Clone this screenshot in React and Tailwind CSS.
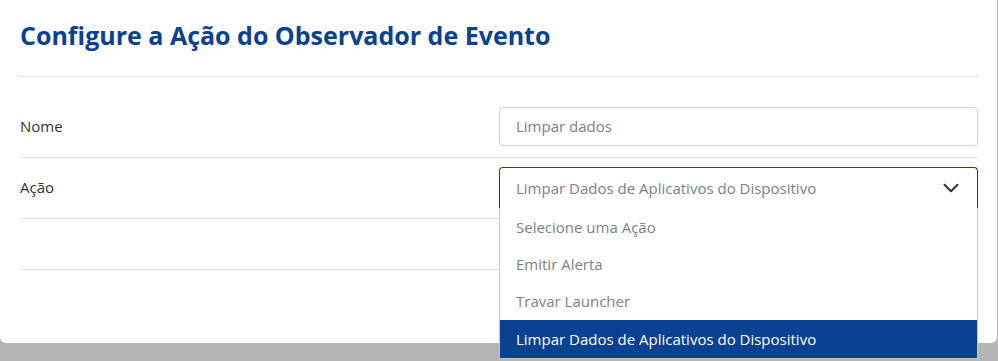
import { ChevronDown } from "lucide-react";

const OPTIONS = [
  "Selecione uma Ação",
  "Emitir Alerta",
  "Travar Launcher",
  "Limpar Dados de Aplicativos do Dispositivo",
];

export default function App() {
  const selected = OPTIONS[3];

  return (
    <div className="h-[361px] w-[998px] overflow-hidden bg-[#b5b5b5] font-['Open_Sans',sans-serif]">
      <div className="h-[343px] w-[997px] rounded-b-md bg-white">
        <div className="px-5">
          <h2 className="flex h-[76px] items-center pb-1 text-[25px] font-bold text-[#0b4191]">
            Configure a Ação do Observador de Evento
          </h2>
          <div className="w-[958px] border-t border-[#dee2e6]" />

          <div className="w-[958px] pt-[30px]">
            <div className="flex items-center border-b border-[#dee2e6] pb-[11px]">
              <label className="w-[479px] text-[15px] text-[#333]">Nome</label>
              <div className="flex h-[39px] flex-1 items-center rounded border border-[#ced4da] px-4 text-[15px] text-[#7b8187]">
                Limpar dados
              </div>
            </div>

            <div className="flex items-center border-b border-[#dee2e6] pt-[9px] pb-[10px]">
              <label className="w-[479px] text-[15px] text-[#333]">Ação</label>
              <div className="relative flex-1">
                <div className="flex h-[41px] items-center justify-between rounded-t border border-b-0 border-[#0b4191] pl-4 pr-[13px] text-[15px] text-[#7b8187]">
                  <span>{selected}</span>
                  <ChevronDown size={26} strokeWidth={1.9} className="text-[#333]" />
                </div>
                <ul className="absolute left-0 right-0 top-[41px] z-10 border border-t-0 border-[#c6c6c6] bg-white text-[15px]">
                  {OPTIONS.map((opt, i) => (
                    <li
                      key={opt}
                      className={
                        opt === selected
                          ? "flex h-[38px] items-center bg-[#0b4191] px-4 text-white"
                          : i === 0
                            ? "flex h-[38px] items-center px-4 text-[#7b8187]"
                            : "flex h-[37px] items-center px-4 text-[#7b8187]"
                      }
                    >
                      {opt}
                    </li>
                  ))}
                </ul>
              </div>
            </div>

            <div className="h-[51px] border-b border-[#dee2e6]" />
          </div>
        </div>
      </div>
    </div>
  );
}
